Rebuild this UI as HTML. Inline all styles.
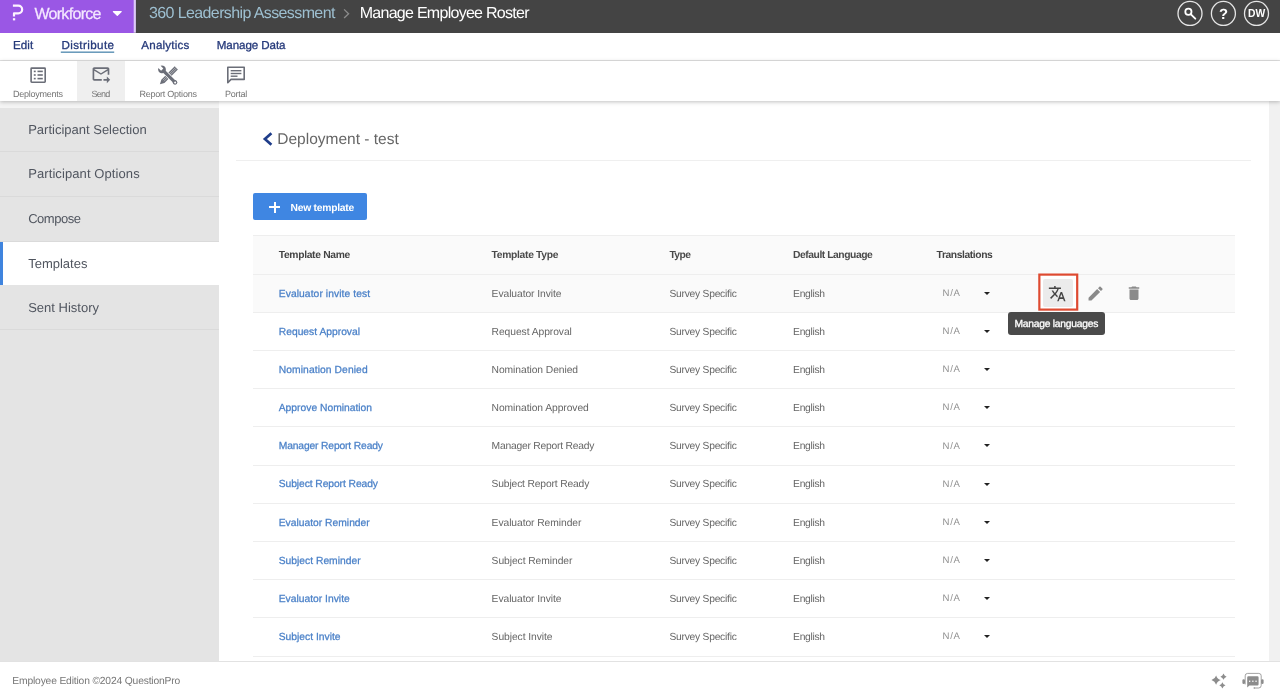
<!DOCTYPE html>
<html lang="en">
<head>
<meta charset="utf-8">
<title>Manage Employee Roster</title>
<style>
*{box-sizing:border-box;margin:0;padding:0}
html,body{width:1280px;height:699px;overflow:hidden;background:#fff;font-family:"Liberation Sans",sans-serif;color:#444;text-rendering:geometricPrecision}
body{position:relative}
#app{position:absolute;left:0;top:0;width:1280px;height:699px;overflow:hidden;will-change:transform;background:#fff}
.abs{position:absolute}
span{white-space:nowrap}
/* top bar */
#topbar{position:absolute;left:0;top:0;width:1280px;height:32.75px;background:#444444}
#brand{position:absolute;left:0;top:0;width:134px;height:32.75px;background:#9a57e5}
#brand .name{position:absolute;left:34.4px;top:4.9px;font-size:16px;line-height:20px;color:#f4e8ff;letter-spacing:-0.69px;-webkit-text-stroke:0.25px #f4e8ff}
#brand .caret{position:absolute;left:112px;top:10.5px;width:0;height:0;border-left:5px solid transparent;border-right:5px solid transparent;border-top:6px solid #fff}
.crumb1{position:absolute;left:149px;top:3.8px;font-size:16px;line-height:20px;color:#9dbfd0;letter-spacing:-0.61px}
.crumbsep{position:absolute;left:342px;top:2.6px;font-size:13px;line-height:20px;color:#8a8a8a}
.crumb2{position:absolute;left:359.7px;top:3.8px;font-size:16px;line-height:20px;color:#fff;letter-spacing:-0.72px}
.circ{position:absolute;top:1px;width:25px;height:25px;border:1.5px solid #e8e8e8;border-radius:50%}
/* nav */
#nav{position:absolute;left:0;top:32.75px;width:1280px;height:28.25px;background:#fff;border-bottom:1px solid #e2e2e2}
#nav span{position:absolute;top:5.7px;font-size:11.6px;line-height:16px;color:#25397a;-webkit-text-stroke:0.3px #25397a}
/* toolbar */
#tool{position:absolute;left:0;top:61px;width:1280px;height:40px;background:#fff;box-shadow:0 1px 4px rgba(0,0,0,.25);z-index:3}
#tool .sel{position:absolute;left:77px;top:0;width:48px;height:40px;background:#efefef}
#tool .lbl{position:absolute;top:27.6px;font-size:9px;line-height:10px;color:#737373;letter-spacing:-0.23px}
/* sidebar */
#side{position:absolute;left:0;top:107.8px;width:219px;height:554px;background:#e4e4e4}
#side .it{position:absolute;left:0;width:219px;height:44.5px;border-bottom:1px solid #dadada;font-size:13px;line-height:18px;color:#50555f;padding:14.15px 0 0 28.2px;white-space:nowrap}
#side .it.act{background:#fff;border-left:3px solid #3f84de;padding-left:25.2px;border-bottom:0}
/* main */
#scroll{position:absolute;left:1269px;top:101px;width:11px;height:561px;background:#f1f1f1}
#title{position:absolute;left:277.3px;top:128.7px;font-size:15.5px;line-height:22px;color:#666;white-space:nowrap}
#hr{position:absolute;left:236px;top:160px;width:1015px;height:1px;background:#efefef}
#btn{position:absolute;left:253px;top:193px;width:114px;height:27px;background:#3f86e2;border-radius:2px;color:#fff}
#btn span{position:absolute;left:37.5px;top:8.6px;font-size:10.3px;line-height:13px;font-weight:700;letter-spacing:-0.24px}
#btn i{position:absolute;background:#fff}
#tbl{position:absolute;left:253px;top:235px;width:982px;height:430px}
.row{position:absolute;left:0;width:982px;height:38.175px;border-top:1px solid #eeeeee;font-size:10.3px;line-height:13px;color:#666}
.row span{position:absolute;top:12.8px}
.row.h{background:#fafafa;color:#4a4a4a;font-weight:700;height:38.75px}
.row.h span{top:12.85px}
.row.hv{background:#fafafa}
.c1{left:25.75px}.c2{left:238.6px}.c3{left:416.4px}.c4{left:540.1px}.c5{left:689.5px}
.row .c1{color:#4a80c8;-webkit-text-stroke:0.25px #4a80c8}
.row.h .c1{color:#444;-webkit-text-stroke:0}
.row.h .c5{left:683.6px}
.row .c5{color:#919191;letter-spacing:0.75px;font-size:9.6px;top:12.1px}
.row .c2{letter-spacing:-0.07px}.row .c3{letter-spacing:-0.25px}.row .c4{letter-spacing:-0.31px}
.row.h .c5{color:#444;font-size:10.3px;top:12.85px}
.dd{position:absolute;left:730.75px;top:17px;width:0;height:0;border-left:3.3px solid transparent;border-right:3.3px solid transparent;border-top:3.6px solid #222}
/* footer */
#foot{position:absolute;left:0;top:660.6px;width:1280px;height:39px;background:#fff;border-top:1px solid #e2e2e2;z-index:4}
#foot span{position:absolute;left:12.3px;top:13.8px;font-size:10.3px;line-height:13px;color:#777;letter-spacing:-0.17px}
#tip{position:absolute;left:1008px;top:312px;width:96.75px;height:23px;background:#4a4a4a;border-radius:3px;color:#fff;font-size:10.3px;line-height:13px;z-index:5}
#tip span{position:absolute;left:6.4px;top:6.4px;letter-spacing:-0.24px;-webkit-text-stroke:0.3px #fff}
#hl{position:absolute;left:1038.5px;top:273.5px;width:40px;height:36.75px;border:1.7px solid #e04a32;z-index:5}
#hlbg{position:absolute;left:1043px;top:279.4px;width:29.5px;height:27.5px;background:#ebebeb;border-radius:2px;z-index:4}
</style>
</head>
<body>
<div id="app">
<div id="topbar">
  <div id="brand">
    <svg class="abs" style="left:0;top:0" width="134" height="33" viewBox="0 0 134 33"><path d="M12.9 5.7H18.3a3.85 3.85 0 0 1 0 7.7H14V16.5" fill="none" stroke="#fdf3ff" stroke-width="2.2" stroke-linejoin="round"/><rect x="12.9" y="18.2" width="2.3" height="2.2" fill="#fdf3ff"/><path d="M113.400 10.900h7.800a.6.6 0 0 1 .45 1l-3.900 3.900a.65.65 0 0 1-.9 0l-3.900-3.900a.6.6 0 0 1 .45-1z" fill="#fff"/></svg>
    <span class="name">Workforce</span>
  </div>
  <svg class="abs" style="left:132px;top:0" width="6" height="33" viewBox="132 0 6 33"><rect x="132" y="0" width="1.8" height="32.75" fill="#9a57e5"/><rect x="133.7" y="0" width="2.2" height="32.75" fill="#ddc9f8"/></svg>
  <span class="crumb1">360 Leadership Assessment</span>
  <svg class="abs" style="left:340px;top:6px" width="14" height="16" viewBox="340 6 14 16"><path d="M344.1 9.4l4.5 4.3-4.5 4.3" fill="none" stroke="#8c8c8c" stroke-width="1.3"/></svg>
  <span class="crumb2">Manage Employee Roster</span>
  <svg class="abs" style="left:1170px;top:0" width="110" height="33" viewBox="1170 0 110 33">
    <g fill="none" stroke="#e6e6e6" stroke-width="1.3"><circle cx="1190" cy="13.45" r="12"/><circle cx="1223.4" cy="13.45" r="12"/><circle cx="1256.5" cy="13.45" r="12"/></g>
    <circle cx="1188.4" cy="11.8" r="3.1" fill="none" stroke="#fff" stroke-width="1.8"/><path d="M1190.9 14.3l4.4 4.4" stroke="#fff" stroke-width="1.9" stroke-linecap="round"/>
    <text x="1223.6" y="18.9" font-family="Liberation Sans, sans-serif" font-weight="700" font-size="14.8" fill="#fff" text-anchor="middle">?</text>
    <text x="1256.7" y="16.8" font-family="Liberation Sans, sans-serif" font-weight="700" font-size="11.6" fill="#fff" text-anchor="middle" textLength="17.2" lengthAdjust="spacingAndGlyphs">DW</text>
  </svg>
</div>
<div id="nav">
  <span style="left:12.9px;letter-spacing:0.14px">Edit</span>
  <span style="left:61.4px;letter-spacing:0.41px">Distribute</span><svg class="abs" style="left:58px;top:16px" width="60" height="6" viewBox="58 48.75 60 6"><rect x="60.8" y="51.2" width="53.4" height="1.5" fill="#6497b8"/></svg>
  <span style="left:141.3px;letter-spacing:0.21px">Analytics</span>
  <span style="left:216.8px;letter-spacing:-0.09px">Manage Data</span>
</div>
<div id="tool">
  <div class="sel"></div>
  <svg class="abs" style="left:0;top:0" width="260" height="40" viewBox="0 61 260 40">
    <g fill="#6b6e78">
      <rect x="31.1" y="68.1" width="14.1" height="14.1" rx="0.6" fill="none" stroke="#6b6e78" stroke-width="1.6"/>
      <rect x="33.8" y="70.6" width="1.9" height="1.6"/><rect x="33.8" y="74.2" width="1.9" height="1.6"/><rect x="33.8" y="77.8" width="1.9" height="1.6"/>
      <rect x="37.5" y="70.6" width="5.3" height="1.6"/><rect x="37.5" y="74.2" width="5.3" height="1.6"/><rect x="37.5" y="77.8" width="5.3" height="1.6"/>
      <g transform="translate(90.9 63.95) scale(0.838)"><path d="M20 4H4c-1.1 0-2 .9-2 2v12c0 1.1.9 2 2 2h9v-2H4V8l8 5 8-5v5h2V6c0-1.1-.9-2-2-2zm-8 7L4 6h16l-8 5zm7 4 4 4-4 4v-3h-4v-2h4v-3z"/></g>
      <g transform="translate(176.3 67.9) rotate(135)"><path d="M0 -2.2H19L23.2 0 19 2.2H0z"/><path d="M0 -0.75H18.2M0 0.75H18.2" stroke="#fff" stroke-width="0.55" opacity=".75"/></g>
      <g transform="translate(162 69.4) rotate(45)"><g stroke="#fff" stroke-width="1.4"><path d="M0.3 -1.6L-3.56 -1.6A3.9 3.9 0 1 1 -3.56 1.6L0.3 1.6Z"/><rect x="2.5" y="-1.6" width="16" height="3.2"/><circle cx="18.4" cy="0" r="2.3"/></g><path d="M0.3 -1.6L-3.56 -1.6A3.9 3.9 0 1 1 -3.56 1.6L0.3 1.6Z"/><rect x="2.5" y="-1.6" width="16" height="3.2"/><circle cx="18.4" cy="0" r="2.3"/><circle cx="18.6" cy="0" r="1" fill="#fff"/></g>
      <path d="M227.8 67.2h16.4v12.2h-13.2l-3.2 3.3z" fill="none" stroke="#6b6e78" stroke-width="1.6" stroke-linejoin="round"/>
      <rect x="230.7" y="70.0" width="10.7" height="1.4"/><rect x="230.7" y="72.8" width="10.7" height="1.4"/><rect x="230.7" y="75.5" width="6.8" height="1.4"/>
    </g>
  </svg>
  <span class="lbl" style="left:12.9px">Deployments</span>
  <span class="lbl" style="left:91.4px;letter-spacing:-0.7px">Send</span>
  <span class="lbl" style="left:139.4px">Report Options</span>
  <span class="lbl" style="left:225px">Portal</span>
</div>
<div class="abs" style="left:0;top:101px;width:219px;height:7px;background:#f4f4f4"></div>
<div id="side">
  <div class="it" style="top:-0.8px;height:45px;padding-top:14.15px">Participant Selection</div>
  <div class="it" style="top:44.2px;height:45px;padding-top:13px;letter-spacing:0.09px">Participant Options</div>
  <div class="it" style="top:89.2px;height:45px;padding-top:13.4px;letter-spacing:-0.47px">Compose</div>
  <div class="it act" style="top:134.2px;height:43px;padding-top:13.2px">Templates</div>
  <div class="it" style="top:177.2px;height:45px;padding-top:14.3px">Sent History</div>
</div>
<div id="scroll"></div>
<svg class="abs" style="left:258px;top:128px" width="18" height="22" viewBox="258 128 18 22"><path d="M271.4 133.2l-6.5 5.8 6.5 5.8" fill="none" stroke="#1f3d8a" stroke-width="2.7"/></svg>
<div id="title">Deployment - test</div>
<div id="hr"></div>
<div id="btn"><i style="left:16.4px;top:13.4px;width:10.6px;height:1.8px"></i><i style="left:20.8px;top:9px;width:1.8px;height:10.6px"></i><span>New template</span></div>
<div id="tbl">
  <div class="row h" style="top:0"><span class="c1" style="letter-spacing:-0.32px">Template Name</span><span class="c2" style="letter-spacing:-0.31px">Template Type</span><span class="c3" style="letter-spacing:-0.56px">Type</span><span class="c4" style="letter-spacing:-0.45px">Default Language</span><span class="c5" style="letter-spacing:-0.41px">Translations</span></div>
  <div class="row hv" style="top:38.750px"><span class="c1" style="letter-spacing:0.07px">Evaluator invite test</span><span class="c2">Evaluator Invite</span><span class="c3">Survey Specific</span><span class="c4">English</span><span class="c5">N/A</span><i class="dd"></i></div>
  <div class="row" style="top:76.925px"><span class="c1">Request Approval</span><span class="c2">Request Approval</span><span class="c3">Survey Specific</span><span class="c4">English</span><span class="c5">N/A</span><i class="dd"></i></div>
  <div class="row" style="top:115.100px"><span class="c1" style="letter-spacing:0.08px">Nomination Denied</span><span class="c2">Nomination Denied</span><span class="c3">Survey Specific</span><span class="c4">English</span><span class="c5">N/A</span><i class="dd"></i></div>
  <div class="row" style="top:153.275px"><span class="c1">Approve Nomination</span><span class="c2">Nomination Approved</span><span class="c3">Survey Specific</span><span class="c4">English</span><span class="c5">N/A</span><i class="dd"></i></div>
  <div class="row" style="top:191.450px"><span class="c1" style="letter-spacing:-0.15px">Manager Report Ready</span><span class="c2" style="letter-spacing:-0.22px">Manager Report Ready</span><span class="c3">Survey Specific</span><span class="c4">English</span><span class="c5">N/A</span><i class="dd"></i></div>
  <div class="row" style="top:229.625px"><span class="c1" style="letter-spacing:-0.08px">Subject Report Ready</span><span class="c2" style="letter-spacing:-0.16px">Subject Report Ready</span><span class="c3">Survey Specific</span><span class="c4">English</span><span class="c5">N/A</span><i class="dd"></i></div>
  <div class="row" style="top:267.800px"><span class="c1">Evaluator Reminder</span><span class="c2">Evaluator Reminder</span><span class="c3">Survey Specific</span><span class="c4">English</span><span class="c5">N/A</span><i class="dd"></i></div>
  <div class="row" style="top:305.975px"><span class="c1">Subject Reminder</span><span class="c2">Subject Reminder</span><span class="c3">Survey Specific</span><span class="c4">English</span><span class="c5">N/A</span><i class="dd"></i></div>
  <div class="row" style="top:344.150px"><span class="c1">Evaluator Invite</span><span class="c2">Evaluator Invite</span><span class="c3">Survey Specific</span><span class="c4">English</span><span class="c5">N/A</span><i class="dd"></i></div>
  <div class="row" style="top:382.325px"><span class="c1">Subject Invite</span><span class="c2">Subject Invite</span><span class="c3">Survey Specific</span><span class="c4">English</span><span class="c5">N/A</span><i class="dd"></i></div>
  <div class="row" style="top:420.500px;height:5px"></div>
</div>
<div class="abs" style="left:1039px;top:274px;width:38px;height:36px;background:#fff;z-index:3"></div>
<div id="hlbg"></div>
<svg class="abs" style="left:1040px;top:280px;z-index:5" width="110" height="26" viewBox="1040 280 110 26">
  <g transform="translate(1048.1 284.5) scale(0.757)" fill="#444"><path d="M12.87 15.07l-2.54-2.51.03-.03c1.74-1.94 2.98-4.17 3.71-6.53H17V4h-7V2H8v2H1v1.99h11.17C11.5 7.92 10.44 9.75 9 11.35 8.07 10.32 7.3 9.19 6.69 8h-2c.73 1.63 1.73 3.17 2.98 4.56l-5.09 5.02L4 19l5-5 3.11 3.11.76-2.04zM18.5 10h-2L12 22h2l1.12-3h4.75L21 22h2l-4.5-12zm-2.62 7l1.62-4.33L19.12 17h-3.24z"/></g>
  <g transform="translate(1086.2 284.2) scale(0.78)" fill="#8a8a8a"><path d="M3 17.25V21h3.75L17.81 9.94l-3.75-3.75L3 17.25zM20.71 7.04c.39-.39.39-1.02 0-1.41l-2.34-2.34c-.39-.39-1.02-.39-1.41 0l-1.83 1.83 3.75 3.75 1.83-1.83z"/></g>
  <g transform="translate(1125 284.25) scale(0.75)" fill="#8a8a8a"><path d="M6 19c0 1.1.9 2 2 2h8c1.1 0 2-.9 2-2V7H6v12zM19 4h-3.5l-1-1h-5l-1 1H5v2h14V4z"/></g>
</svg>
<svg class="abs" style="left:1036px;top:271px;z-index:5" width="46" height="42" viewBox="1036 271 46 42"><rect x="1039.35" y="274.6" width="37.85" height="35" fill="none" stroke="#de4a31" stroke-width="2.2"/></svg>
<div id="tip"><span>Manage languages</span></div>
<div id="foot"><svg class="abs" style="left:1205px;top:8px" width="70" height="24" viewBox="1205 669.6 70 24">
  <g fill="#8c8c8c">
    <path d="M1216.15 675q1.100 3.600 4.700 4.700-3.600 1.100-4.700 4.700-1.100-3.600-4.700-4.700 3.600-1.100 4.700-4.700z"/>
    <path d="M1223.500 673.200q.75 2.350 3.100 3.100-2.350.75-3.100 3.100-.75-2.350-3.100-3.100 2.350-.75 3.100-3.100z"/>
    <path d="M1222.400 681.800q.75 2.350 3.100 3.100-2.350.75-3.100 3.100-.75-2.350-3.100-3.100 2.350-.75 3.100-3.100z"/>
    <path d="M1248.4 675.9h9a1.2 1.2 0 0 1 1.200 1.200v6.800a1.200 1.200 0 0 1-1.200 1.200h-8l-2.200 1.900v-9.900a1.200 1.200 0 0 1 1.200-1.200z"/>
    <rect x="1242.4" y="678.8" width="2.600" height="4.800" rx="1.2"/><rect x="1261.100" y="678.8" width="2.500" height="4.800" rx="1.2"/>
    <circle cx="1254.300" cy="687.600" r=".8"/>
  </g>
  <path d="M1245.200 684v-8.600a2.400 2.400 0 0 1 2.400-2.400h11.200a2.400 2.400 0 0 1 2.400 2.400v9.600a2.600 2.600 0 0 1-2.600 2.600h-4" fill="none" stroke="#8c8c8c" stroke-width=".8"/>
  <g fill="#fff"><rect x="1249" y="680.200" width="1.300" height="1.300"/><rect x="1252.200" y="680.200" width="1.300" height="1.300"/><rect x="1255.400" y="680.200" width="1.300" height="1.300"/></g>
</svg><span>Employee Edition ©2024 QuestionPro</span></div>
</div>
</body>
</html>
